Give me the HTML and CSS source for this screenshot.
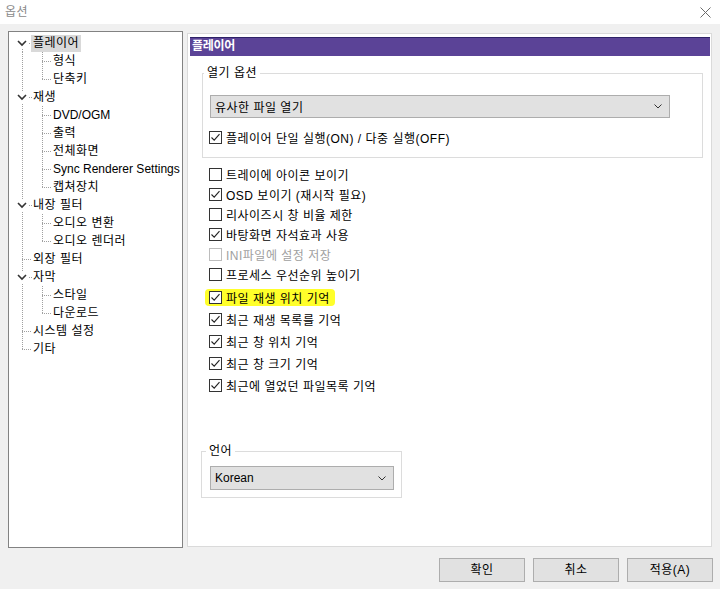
FILE: index.html
```html
<!DOCTYPE html>
<html lang="ko">
<head>
<meta charset="utf-8">
<title>옵션</title>
<link rel="stylesheet" href="styles.css">
</head>
<body>
<div class="window">
  <div class="titlebar">
    <span class="title">옵션</span>
    <svg class="close" width="11" height="11" viewBox="0 0 11 11"><path d="M0.5 0.5 L10.5 10.5 M10.5 0.5 L0.5 10.5" stroke="#6b6b6b" stroke-width="1" fill="none"/></svg>
  </div>

  <div class="main">
    <div class="tree">
      <div class="row"><span class="c exf"><svg class="chev" width="12" height="12" viewBox="0 0 12 12"><path d="M2 4 L6 8 L10 4" stroke="#333" stroke-width="1.6" fill="none"/></svg></span><span class="lbl sel">플레이어</span></div>
      <div class="row"><span class="c v"></span><span class="c t"></span><span class="lbl">형식</span></div>
      <div class="row"><span class="c v"></span><span class="c l"></span><span class="lbl">단축키</span></div>
      <div class="row"><span class="c ex"><svg class="chev" width="12" height="12" viewBox="0 0 12 12"><path d="M2 4 L6 8 L10 4" stroke="#333" stroke-width="1.6" fill="none"/></svg></span><span class="lbl">재생</span></div>
      <div class="row"><span class="c v"></span><span class="c t"></span><span class="lbl latin">DVD/OGM</span></div>
      <div class="row"><span class="c v"></span><span class="c t"></span><span class="lbl">출력</span></div>
      <div class="row"><span class="c v"></span><span class="c t"></span><span class="lbl">전체화면</span></div>
      <div class="row"><span class="c v"></span><span class="c t"></span><span class="lbl latin">Sync Renderer Settings</span></div>
      <div class="row"><span class="c v"></span><span class="c l"></span><span class="lbl">캡쳐장치</span></div>
      <div class="row"><span class="c ex"><svg class="chev" width="12" height="12" viewBox="0 0 12 12"><path d="M2 4 L6 8 L10 4" stroke="#333" stroke-width="1.6" fill="none"/></svg></span><span class="lbl">내장 필터</span></div>
      <div class="row"><span class="c v"></span><span class="c t"></span><span class="lbl">오디오 변환</span></div>
      <div class="row"><span class="c v"></span><span class="c l"></span><span class="lbl">오디오 렌더러</span></div>
      <div class="row"><span class="c t"></span><span class="lbl">외장 필터</span></div>
      <div class="row"><span class="c ex"><svg class="chev" width="12" height="12" viewBox="0 0 12 12"><path d="M2 4 L6 8 L10 4" stroke="#333" stroke-width="1.6" fill="none"/></svg></span><span class="lbl">자막</span></div>
      <div class="row"><span class="c v"></span><span class="c t"></span><span class="lbl">스타일</span></div>
      <div class="row"><span class="c v"></span><span class="c l"></span><span class="lbl">다운로드</span></div>
      <div class="row"><span class="c t"></span><span class="lbl">시스템 설정</span></div>
      <div class="row"><span class="c l"></span><span class="lbl">기타</span></div>
    </div>

    <div class="panel">
      <div class="header">플레이어</div>

      <fieldset class="group open-group">
        <legend>열기 옵션</legend>
        <div class="select wide"><span>유사한 파일 열기</span><svg width="8" height="5" viewBox="0 0 8 5"><path d="M0.5 0.5 L4 4 L7.5 0.5" stroke="#333" stroke-width="1" fill="none"/></svg></div>
        <div class="chk single"><span class="box"><svg width="11" height="11" viewBox="0 0 11 11"><path d="M1.5 5.5 L4.2 8.2 L9.5 2.2" stroke="#222" stroke-width="1.1" fill="none"/></svg></span><span>플레이어 단일 실행(ON) / 다중 실행(OFF)</span></div>
      </fieldset>

      <div class="list">
        <div class="chk r20"><span class="box"></span><span>트레이에 아이콘 보이기</span></div>
        <div class="chk r20"><span class="box"><svg width="11" height="11" viewBox="0 0 11 11"><path d="M1.5 5.5 L4.2 8.2 L9.5 2.2" stroke="#222" stroke-width="1.1" fill="none"/></svg></span><span>OSD 보이기 (재시작 필요)</span></div>
        <div class="chk r20"><span class="box"></span><span>리사이즈시 창 비율 제한</span></div>
        <div class="chk r20"><span class="box"><svg width="11" height="11" viewBox="0 0 11 11"><path d="M1.5 5.5 L4.2 8.2 L9.5 2.2" stroke="#222" stroke-width="1.1" fill="none"/></svg></span><span>바탕화면 자석효과 사용</span></div>
        <div class="chk r20 disabled"><span class="box"></span><span>INI파일에 설정 저장</span></div>
        <div class="chk r20"><span class="box"></span><span>프로세스 우선순위 높이기</span></div>
        <div class="chk r22 first22"><span class="hl"><span class="box"><svg width="11" height="11" viewBox="0 0 11 11"><path d="M1.5 5.5 L4.2 8.2 L9.5 2.2" stroke="#222" stroke-width="1.1" fill="none"/></svg></span><span>파일 재생 위치 기억</span></span></div>
        <div class="chk r22"><span class="box"><svg width="11" height="11" viewBox="0 0 11 11"><path d="M1.5 5.5 L4.2 8.2 L9.5 2.2" stroke="#222" stroke-width="1.1" fill="none"/></svg></span><span>최근 재생 목록를 기억</span></div>
        <div class="chk r22"><span class="box"><svg width="11" height="11" viewBox="0 0 11 11"><path d="M1.5 5.5 L4.2 8.2 L9.5 2.2" stroke="#222" stroke-width="1.1" fill="none"/></svg></span><span>최근 창 위치 기억</span></div>
        <div class="chk r22"><span class="box"><svg width="11" height="11" viewBox="0 0 11 11"><path d="M1.5 5.5 L4.2 8.2 L9.5 2.2" stroke="#222" stroke-width="1.1" fill="none"/></svg></span><span>최근 창 크기 기억</span></div>
        <div class="chk r22"><span class="box"><svg width="11" height="11" viewBox="0 0 11 11"><path d="M1.5 5.5 L4.2 8.2 L9.5 2.2" stroke="#222" stroke-width="1.1" fill="none"/></svg></span><span>최근에 열었던 파일목록 기억</span></div>
      </div>

      <fieldset class="group lang-group">
        <legend>언어</legend>
        <div class="select lang"><span class="latin">Korean</span><svg width="8" height="5" viewBox="0 0 8 5"><path d="M0.5 0.5 L4 4 L7.5 0.5" stroke="#333" stroke-width="1" fill="none"/></svg></div>
      </fieldset>
    </div>
  </div>

  <div class="buttons">
    <div class="btn">확인</div>
    <div class="btn">취소</div>
    <div class="btn">적용(A)</div>
  </div>
</div>
</body>
</html>
```

FILE: styles.css
```css
html, body {
  margin: 0;
  padding: 0;
}
body {
  width: 720px;
  height: 589px;
  overflow: hidden;
  background: #f0f0f0;
  font-family: "Liberation Sans", "Noto Sans CJK KR", sans-serif;
  font-size: 12px;
  color: #000;
  letter-spacing: 0.5px;
}
.latin {
  letter-spacing: 0;
}
.window {
  width: 720px;
  height: 589px;
}
.titlebar {
  height: 24px;
  background: #fff;
  display: flex;
  align-items: center;
  justify-content: space-between;
  padding: 0 9px 0 5px;
  box-sizing: border-box;
}
.title {
  color: #8a8a8a;
  font-size: 12px;
  line-height: 16px;
}
.close {
  display: block;
}

.main {
  display: flex;
  gap: 4px;
  margin-top: 7px;
  padding-left: 8px;
  height: 517px;
}

/* tree */
.tree {
  width: 175px;
  height: 517px;
  box-sizing: border-box;
  border: 1px solid #828282;
  background: #fff;
  padding: 2px 0 0 3px;
}
.row {
  display: flex;
  height: 18px;
  align-items: center;
}
.c {
  flex: none;
  width: 20px;
  height: 18px;
  background-repeat: no-repeat;
  display: flex;
  align-items: center;
  justify-content: center;
}
.v {
  background-image: repeating-linear-gradient(to bottom, #a0a0a0 0 1px, transparent 1px 2px);
  background-size: 1px 18px;
  background-position: 10px 0;
}
.t {
  background-image:
    repeating-linear-gradient(to bottom, #a0a0a0 0 1px, transparent 1px 2px),
    repeating-linear-gradient(to right, #a0a0a0 0 1px, transparent 1px 2px);
  background-size: 1px 18px, 10px 1px;
  background-position: 10px 0, 10px 9px;
}
.l {
  background-image:
    repeating-linear-gradient(to bottom, #a0a0a0 0 1px, transparent 1px 2px),
    repeating-linear-gradient(to right, #a0a0a0 0 1px, transparent 1px 2px);
  background-size: 1px 10px, 10px 1px;
  background-position: 10px 0, 10px 9px;
}
.ex {
  background-image:
    repeating-linear-gradient(to bottom, #a0a0a0 0 1px, transparent 1px 2px),
    repeating-linear-gradient(to right, #a0a0a0 0 1px, transparent 1px 2px);
  background-size: 1px 18px, 3px 1px;
  background-position: 10px 0, 17px 9px;
}
.exf {
  background-image:
    repeating-linear-gradient(to bottom, #a0a0a0 0 1px, transparent 1px 2px),
    repeating-linear-gradient(to right, #a0a0a0 0 1px, transparent 1px 2px);
  background-size: 1px 9px, 3px 1px;
  background-position: 10px 9px, 17px 9px;
}
.chev {
  display: block;
  background: #fff;
  margin-left: -1px;
}
.lbl {
  margin-left: -1px;
  padding: 0 2px;
  height: 17px;
  line-height: 17px;
  white-space: nowrap;
}
.lbl.sel {
  background: #d9d9d9;
}

/* right panel */
.panel {
  width: 525px;
  height: 514px;
  margin-top: 2px;
  box-sizing: border-box;
  border: 1px solid #dadada;
  background: #fff;
  padding: 3px 1px 0 2px;
}
.header {
  height: 19px;
  box-sizing: border-box;
  background: #5b4397;
  border-top: 1px solid #2e2266;
  color: #fff;
  font-weight: bold;
  font-size: 12px;
  line-height: 17px;
  padding-left: 2px;
  letter-spacing: -0.3px;
}

.group {
  border: 1px solid #dcdcdc;
  margin: 0;
  min-width: 0;
  box-sizing: border-box;
}
.group legend {
  padding: 0 3px;
  line-height: 16px;
  height: 16px;
  font-size: 12px;
}
.open-group {
  width: 501px;
  margin: 9px 0 0 12px;
  padding: 14px 6px 10px 6px;
}
.open-group legend {
  margin-left: -5px;
}
.select {
  box-sizing: border-box;
  background: #e1e1e1;
  border: 1px solid #adadad;
  display: flex;
  align-items: center;
  justify-content: space-between;
  padding: 0 7px 0 4px;
}
.select svg {
  display: block;
}
.wide {
  width: 460px;
  height: 23px;
  margin-left: 1px;
}
.single {
  margin-top: 9px;
  height: 20px;
}

.chk {
  display: flex;
  align-items: center;
  gap: 4px;
  white-space: nowrap;
}
.box {
  flex: none;
  width: 13px;
  height: 13px;
  box-sizing: border-box;
  border: 1px solid #333;
  background: #fff;
  display: flex;
  align-items: center;
  justify-content: center;
}
.box svg {
  display: block;
}
.disabled {
  color: #a0a0a0;
}
.disabled .box {
  border-color: #bcbcbc;
}
.list {
  margin: 6px 0 0 19px;
}
.r20 {
  height: 20px;
}
.r22 {
  height: 22px;
}
.first22 {
  margin-top: 2px;
}
.hl {
  display: flex;
  align-items: center;
  gap: 4px;
  background: #ffff2a;
  margin-left: -4px;
  padding: 0 5px 0 4px;
  height: 17px;
  border-radius: 4px;
}

.lang-group {
  width: 201px;
  margin: 47px 0 0 11px;
  padding: 7px 8px 7px 8px;
}
.lang-group legend {
  margin-left: -4px;
}
.lang {
  width: 184px;
  height: 24px;
}

.buttons {
  display: flex;
  justify-content: flex-end;
  gap: 8px;
  padding-right: 7px;
  margin-top: 10px;
}
.btn {
  width: 86px;
  height: 24px;
  box-sizing: border-box;
  background: #e1e1e1;
  border: 1px solid #adadad;
  text-align: center;
  line-height: 22px;
}
```
